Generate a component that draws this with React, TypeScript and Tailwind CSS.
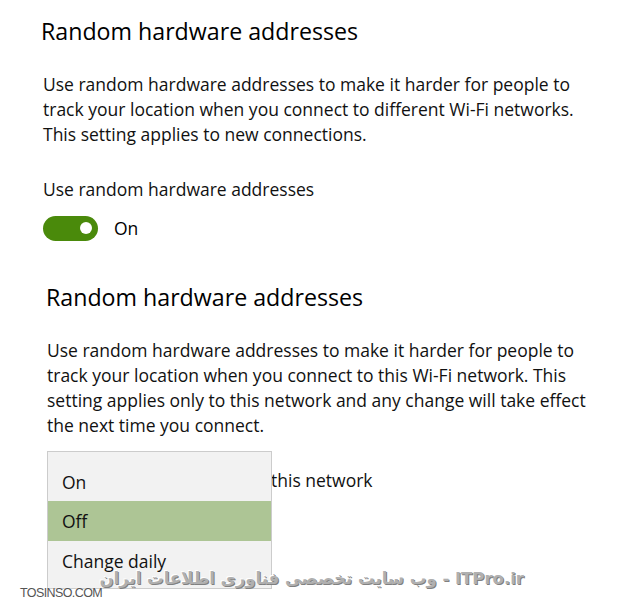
export default function App() {
  return (
    <div className="relative h-[613px] w-[641px] overflow-hidden bg-white font-['Open_Sans',sans-serif] text-[#000]">
      <section className="pl-[41px] pt-[15px]">
        <h2 className="text-[23.2px] leading-[32px]">Random hardware addresses</h2>
        <p className="mt-[25px] pl-[2px] text-[17.5px] leading-[25px] text-[#111]">
          Use random hardware addresses to make it harder for people to
          <br />
          track your location when you connect to different Wi-Fi networks.
          <br />
          This setting applies to new connections.
        </p>
        <p className="mt-[30px] pl-[2px] text-[17.5px] leading-[25px] text-[#111]">
          Use random hardware addresses
        </p>
        <div className="mt-[13px] flex items-center gap-[16px] pl-[2px]">
          <div className="flex h-[25px] w-[55px] items-center justify-end rounded-full bg-[#4a8a0b] pr-[6px]">
            <div className="h-[12px] w-[12px] rounded-full bg-white" />
          </div>
          <span className="text-[17.5px]">On</span>
        </div>
      </section>

      <section className="pl-[46px] pt-[40px]">
        <h2 className="text-[23.2px] leading-[32px]">Random hardware addresses</h2>
        <p className="mt-[25px] pl-[1px] text-[17.5px] leading-[25px] text-[#111]">
          Use random hardware addresses to make it harder for people to
          <br />
          track your location when you connect to this Wi-Fi network. This
          <br />
          setting applies only to this network and any change will take effect
          <br />
          the next time you connect.
        </p>
        <div className="relative mt-[30px] flex pl-[1px]">
          <div className="w-[224px] shrink-0" />
          <p className="text-[17.5px] leading-[25px] text-[#111]">this network</p>
          <div className="absolute left-[1px] top-[-17px] w-[225px] border border-[#cccccc] bg-[#f2f2f2] text-[17.5px] text-[#111]">
            <div className="flex h-[49px] items-end pb-[6px] pl-[14px]">On</div>
            <div className="flex h-[40px] items-center bg-[#adc595] pl-[14px]">Off</div>
            <div className="flex h-[47px] items-start pt-[7px] pl-[14px]">Change daily</div>
          </div>
        </div>
      </section>

      <div className="absolute left-[20px] top-[584px] font-['Liberation_Sans',sans-serif] text-[12.5px] tracking-[-0.6px] text-[#555] [text-shadow:0_0_2px_#fff]">
        TOSINSO.COM
      </div>
      <div
        dir="rtl"
        className="absolute left-[120px] top-[567px] w-[404px] whitespace-nowrap text-left font-['DejaVu_Sans',sans-serif] text-[16.5px] font-bold text-[#b0b0b0] [text-shadow:1px_1px_0_#808080,-1px_-1px_0_#fff]"
      >
        ITPro.ir - وب سایت تخصصی فناوری اطلاعات ایران
      </div>
    </div>
  );
}
